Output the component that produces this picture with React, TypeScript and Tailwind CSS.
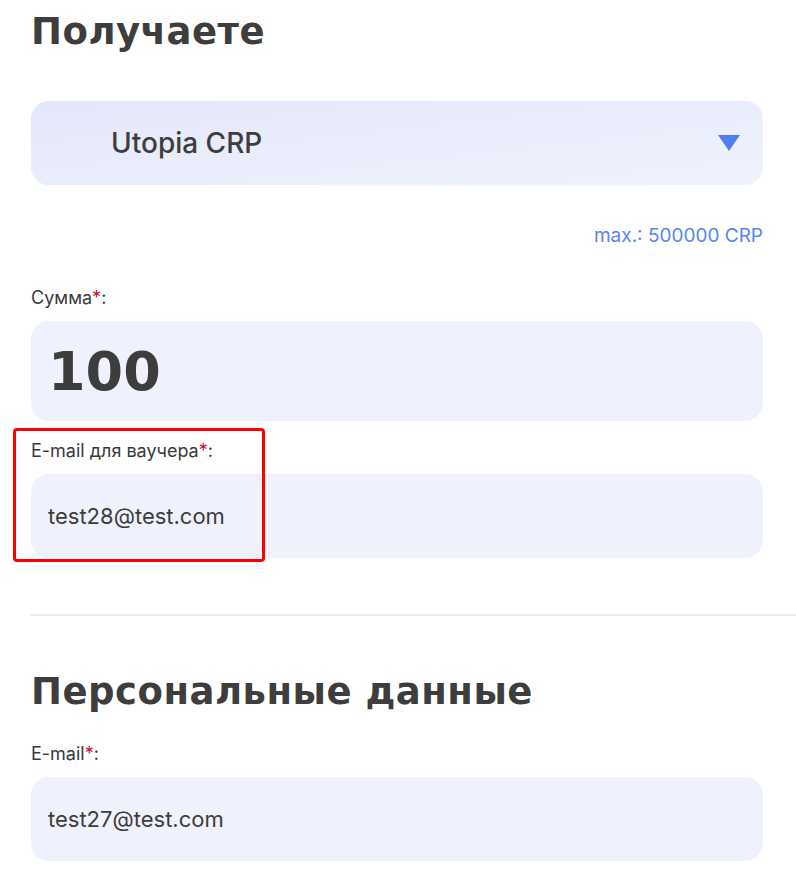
import { useState } from "react";

const headingFont = { fontFamily: '"DejaVu Sans", "Noto Sans", sans-serif' };

type FieldProps = {
    label: string;
    value: string;
};

const Label = ({ label }: { label: string }) => (
    <div className="text-[18px] leading-[22px] text-[#3a3a3a]">
        {label}<span className="text-[#c8102e]">*</span>:
    </div>
);

const TextField = ({ label, value }: FieldProps) => (
    <div className="flex flex-col gap-[12px]">
        <Label label={label} />
        <div className="h-[84px] rounded-[18px] bg-[#eff2fc] flex items-center px-[17px]">
            <span className="text-[22px] text-[#3d3d3d]">{value}</span>
        </div>
    </div>
);

export default function App() {
    const [currency] = useState("Utopia CRP");

    return (
        <div className="min-h-screen bg-white font-['Inter',sans-serif]">
            <div className="pl-[31px] pr-[33px] pt-[10px]">
                {/* Receive section */}
                <h2 className="text-[37px] leading-[44px] font-black text-[#3d3d3d] tracking-[0.5px]" style={headingFont}>
                    Получаете
                </h2>

                <button className="mt-[47px] w-full h-[84px] rounded-[18px] bg-gradient-to-br from-[#e3e7fa] to-[#f0f3fd] flex items-center justify-between pl-[80px] pr-[23px]">
                    <span className="text-[28px] font-medium text-[#3d3d3d]">{currency}</span>
                    <svg width="22" height="16" viewBox="0 0 22 16">
                        <path d="M0 0 H22 L11 16 Z" fill="#4f7ff0" />
                    </svg>
                </button>

                <div className="mt-[40px] text-right text-[19px] leading-[22px] text-[#5a84ee]">
                    max.: 500000 CRP
                </div>

                <div className="mt-[40px] flex flex-col gap-[12px]">
                    <Label label="Сумма" />
                    <div className="h-[100px] rounded-[18px] bg-[#eff2fc] flex items-center px-[17px]">
                        <span className="text-[54px] font-black text-[#3d3d3d]" style={headingFont}>100</span>
                    </div>
                </div>

                {/* Voucher email, highlighted */}
                <div className="relative mt-[19px]">
                    <div className="absolute -left-[18px] -top-[12px] w-[252px] h-[134px] border-[3px] border-[#ff0000] rounded-[4px]" />
                    <TextField label="E-mail для ваучера" value="test28@test.com" />
                </div>
            </div>

            <div className="mt-[56px] ml-[30px] h-[2px] bg-[#ececec]" />

            <div className="pl-[31px] pr-[33px]">
                <h2 className="mt-[54px] text-[37px] leading-[44px] font-black text-[#3d3d3d] tracking-[0.5px]" style={headingFont}>
                    Персональные данные
                </h2>
                <div className="mt-[29px]">
                    <TextField label="E-mail" value="test27@test.com" />
                </div>
            </div>
        </div>
    );
}
